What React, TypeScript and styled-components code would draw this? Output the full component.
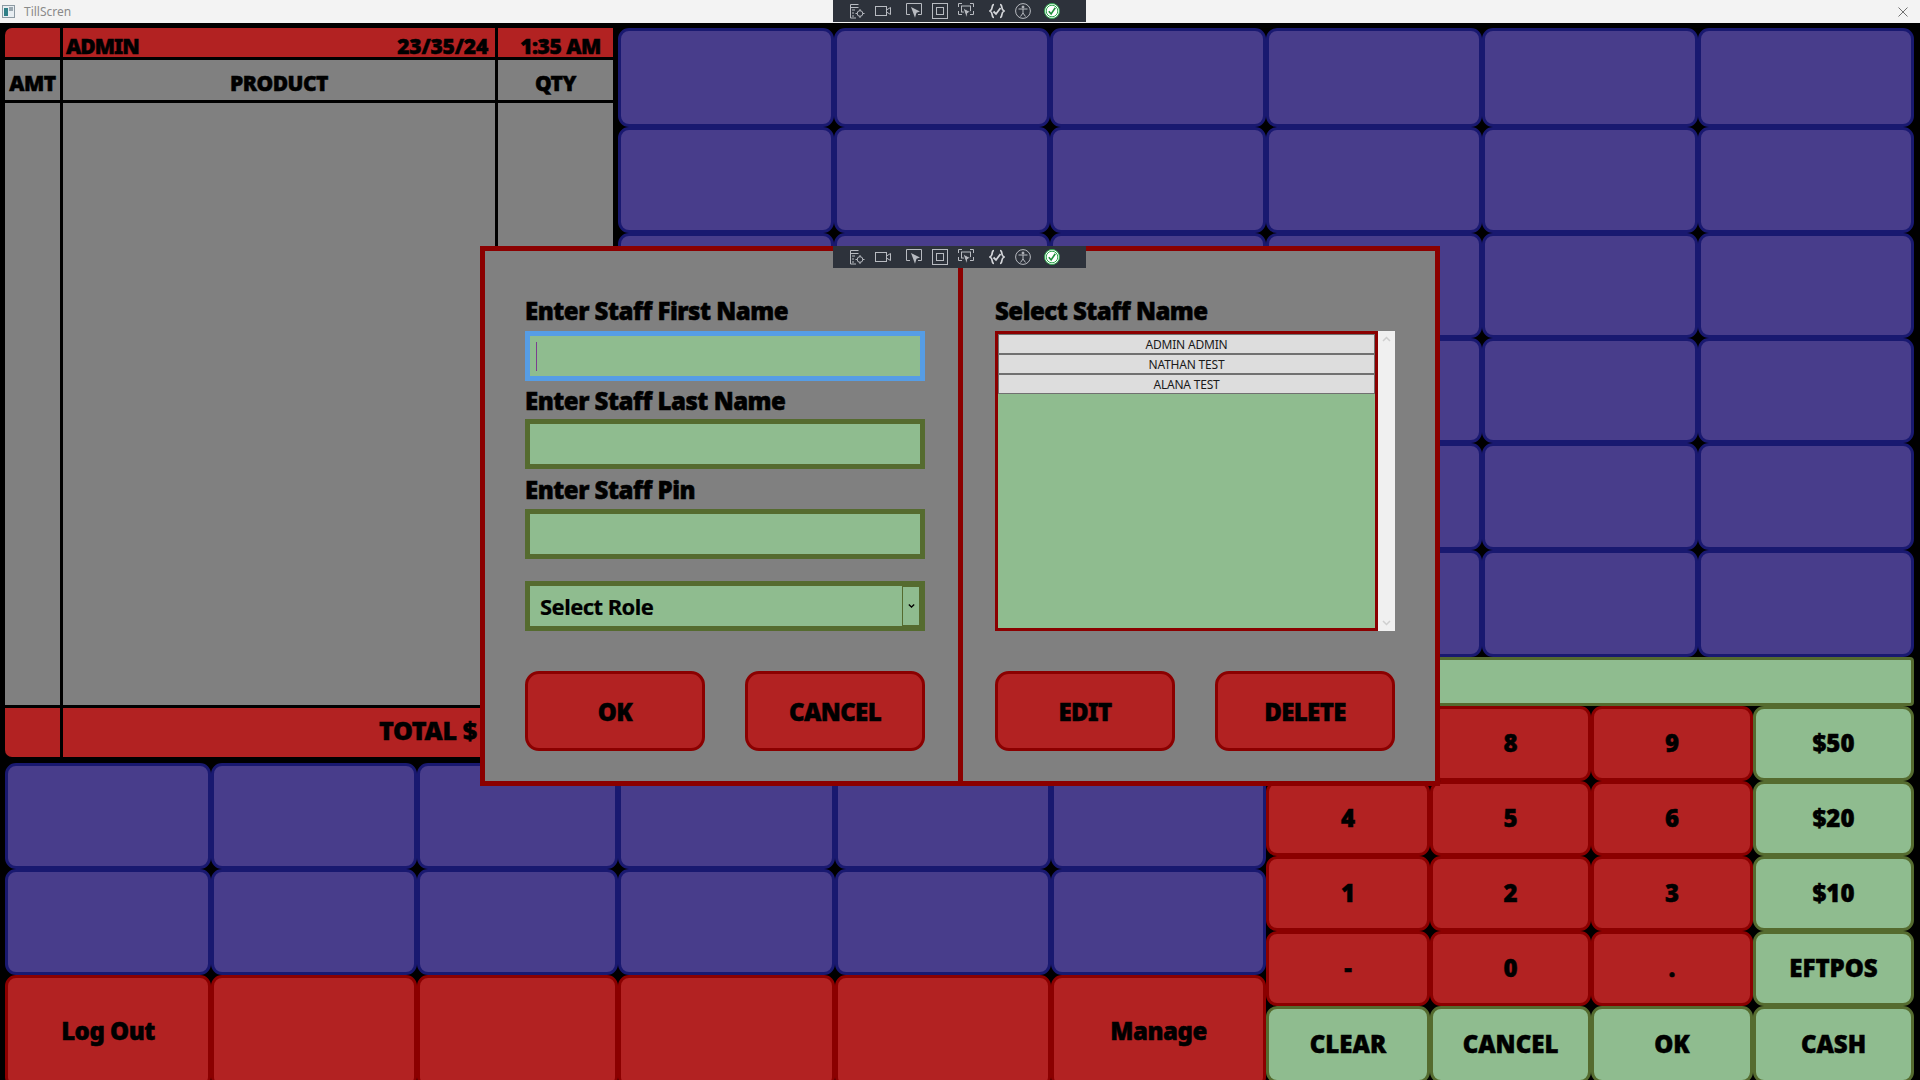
import React from "react";
import styled, { createGlobalStyle } from "styled-components";

const BLACK_FONT = `"Noto Sans", "Open Sans", "Liberation Sans", sans-serif`;
const colors = {
  red: "#b22222",
  darkRed: "#8b0000",
  purple: "#483d8b",
  navy: "#191970",
  green: "#8fbc8f",
  olive: "#556b2f",
  gray: "#808080",
};

const Global = createGlobalStyle`
  html, body { margin: 0; padding: 0; background: #000; }
`;

const Screen = styled.div`
  position: relative;
  width: 1920px;
  height: 1080px;
  overflow: hidden;
  background: #000;
  font-family: ${BLACK_FONT};
  color: #000;
`;

const TitleBar = styled.header`
  display: flex;
  align-items: center;
  height: 23px;
  padding: 0 12px 0 2px;
  box-sizing: border-box;
  background: #f3f3f3;
`;

const TitleText = styled.span`
  margin-left: 9px;
  flex: 1;
  font-size: 12px;
  color: #8a8a8a;
`;

const Body = styled.main`
  display: grid;
  grid-template-columns: 613px 648px 648px;
  grid-template-rows: 629px 49px 57px 318px;
  padding: 5px 6px 0 5px;
`;

const OrderPanel = styled.section`
  grid-column: 1;
  grid-row: 1 / 4;
  align-self: start;
  width: 608px;
  display: grid;
  grid-template-columns: 58px 435px 115px;
  grid-template-rows: 32px 43px 605px 49px;
`;

const Cell = styled.div<{ $tone: "red" | "gray"; $last?: boolean; $lastRow?: boolean; $justify?: string; $corner?: string }>`
  box-sizing: border-box;
  display: flex;
  align-items: center;
  justify-content: ${(p) => p.$justify || "center"};
  background: ${(p) => (p.$tone === "red" ? colors.red : colors.gray)};
  border-right: ${(p) => (p.$last ? "0" : "3px solid #000")};
  border-bottom: ${(p) => (p.$lastRow ? "0" : "3px solid #000")};
  border-radius: ${(p) => p.$corner || "0"};
  white-space: nowrap;
`;

const ColumnCell = styled(Cell)`
  padding-top: 6px;
`;

const HeadText = styled.span<{ $size?: number; $spacing?: number }>`
  font-size: ${(p) => p.$size || 21}px;
  font-weight: 900;
  letter-spacing: ${(p) => p.$spacing ?? -0.5}px;
  line-height: 26px;
  -webkit-text-stroke: 0.5px #000;
`;

const UserRow = styled(Cell)`
  padding: 6px 7px 0 3px;
`;

const TimeCell = styled(Cell)`
  padding: 6px 0 0 10px;
`;

const TotalCell = styled(Cell)`
  grid-column: 2 / 4;
  padding: 0 136px 5px 0;
`;

const PadGrid = styled.div<{ $cols: string; $rows: string }>`
  display: grid;
  grid-template-columns: ${(p) => p.$cols};
  grid-template-rows: ${(p) => p.$rows};
`;

const ProductGrid = styled(PadGrid)`
  grid-column: 2 / 4;
  grid-row: 1;
`;

const LowerGrid = styled(PadGrid)`
  grid-column: 1 / 3;
  grid-row: 4;
`;

const Keypad = styled(PadGrid)`
  grid-column: 3;
  grid-row: 3 / 5;
`;

const toneMap = {
  purple: [colors.purple, colors.navy],
  red: [colors.red, colors.darkRed],
  green: [colors.green, colors.olive],
} as const;

const PadButton = styled.button<{ $tone: keyof typeof toneMap; $tight?: boolean }>`
  box-sizing: border-box;
  margin: 0;
  padding: 0 0 2px;
  background: ${(p) => toneMap[p.$tone][0]};
  border: 3px solid ${(p) => toneMap[p.$tone][1]};
  border-radius: 11px;
  font-family: ${BLACK_FONT};
  font-weight: 900;
  font-size: 24px;
  letter-spacing: ${(p) => (p.$tight ? "-0.5px" : "0")};
  -webkit-text-stroke: 0.5px #000;
  color: #000;
`;

const AmountDisplay = styled.div`
  grid-column: 3;
  grid-row: 2;
  box-sizing: border-box;
  background: ${colors.green};
  border: 3px solid ${colors.olive};
  border-radius: 4px;
`;

const Dialog = styled.section`
  position: absolute;
  left: 480px;
  top: 246px;
  width: 960px;
  height: 540px;
  box-sizing: border-box;
  display: grid;
  grid-template-columns: 473px 5px 472px;
  background: ${colors.gray};
  border: 5px solid ${colors.darkRed};
`;

const Divider = styled.div`
  background: ${colors.darkRed};
`;

const Pane = styled.div<{ $left: number }>`
  padding: 48px 0 0 ${(p) => p.$left}px;
`;

const PaneInner = styled.div`
  width: 400px;
`;

const Group = styled.div<{ $top?: number }>`
  margin-top: ${(p) => p.$top || 0}px;
`;

const FieldLabel = styled.div<{ $line?: number }>`
  height: 32px;
  font-size: 24px;
  line-height: ${(p) => p.$line || 26}px;
  font-weight: 900;
  letter-spacing: -0.5px;
  -webkit-text-stroke: 0.5px #000;
  white-space: nowrap;
`;

const Field = styled.div<{ $focused?: boolean }>`
  box-sizing: border-box;
  height: 50px;
  display: flex;
  align-items: center;
  padding-left: 6px;
  background: ${colors.green};
  border: 5px solid ${(p) => (p.$focused ? "#569de5" : colors.olive)};
`;

const Caret = styled.i`
  display: block;
  width: 1px;
  height: 29px;
  background: #7b3f8f;
`;

const SelectBox = styled.div`
  box-sizing: border-box;
  height: 50px;
  display: flex;
  background: ${colors.olive};
  border: 5px solid ${colors.olive};
`;

const SelectText = styled.span`
  flex: 1;
  padding: 1px 0 0 10px;
  background: ${colors.green};
  font-size: 22px;
  line-height: 38px;
  font-weight: 700;
  letter-spacing: -0.55px;
  -webkit-text-stroke: 0.2px #000;
`;

const SelectToggle = styled.span`
  box-sizing: border-box;
  width: 16px;
  margin: 1px 1px 0 1px;
  height: 38px;
  display: flex;
  align-items: center;
  justify-content: center;
  background: ${colors.green};
`;

const ActionRow = styled.div`
  display: flex;
  justify-content: space-between;
  margin-top: 40px;
`;

const ActionButton = styled.button`
  box-sizing: border-box;
  width: 180px;
  height: 80px;
  padding: 0;
  background: ${colors.red};
  border: 3px solid ${colors.darkRed};
  border-radius: 14px;
  font-family: ${BLACK_FONT};
  font-weight: 900;
  font-size: 24px;
  letter-spacing: -0.6px;
  -webkit-text-stroke: 0.5px #000;
  color: #000;
`;

const ListWrap = styled.div`
  display: flex;
  height: 300px;
`;

const StaffList = styled.ul`
  box-sizing: border-box;
  width: 383px;
  margin: 0;
  padding: 0;
  list-style: none;
  background: ${colors.green};
  border: 3px solid ${colors.darkRed};
`;

const StaffItem = styled.li`
  box-sizing: border-box;
  height: 20px;
  display: flex;
  align-items: center;
  justify-content: center;
  background: #dddddd;
  border: 1px solid #707070;
  font-size: 12px;
  letter-spacing: -0.2px;
  color: #1a1a1a;
`;

const ScrollBar = styled.div`
  width: 17px;
  display: flex;
  flex-direction: column;
  align-items: center;
  justify-content: space-between;
  padding: 5px 0;
  box-sizing: border-box;
  background: #f0f0f0;
`;

const DebugBar = styled.div<{ $top: number }>`
  position: absolute;
  left: 833px;
  top: ${(p) => p.$top}px;
  width: 253px;
  height: 22px;
  display: flex;
  align-items: center;
  padding-left: 16px;
  box-sizing: border-box;
  background: #2d323b;
`;

const ToolIcon = styled.svg<{ $gap?: number }>`
  display: block;
  flex: none;
  width: 16px;
  height: 16px;
  margin-right: ${(p) => p.$gap ?? 10}px;
  fill: none;
  stroke: #b8bbc1;
  stroke-width: 1;
`;

const Toolbar = ({ top }: { top: number }) => (
  <DebugBar $top={top}>
    <ToolIcon viewBox="0 0 16 16">
      <path d="M9.5 1.5H1.5v13.5H7M1.5 4.5h8M3 7h3M3 10h2M3 13h2" />
      <circle cx="11" cy="10.5" r="2.8" />
      <path d="M11 6v2M11 13v2M6.5 10.5h2M13.5 10.5h2" />
    </ToolIcon>
    <ToolIcon viewBox="0 0 16 16" $gap={15}>
      <rect x="0.5" y="3.5" width="11" height="9" />
      <path d="M11.5 7l4-2.5v7l-4-2.5" />
    </ToolIcon>
    <ToolIcon viewBox="0 0 16 16">
      <path d="M4 11.5H.5V.5h15v11H12" />
      <path d="M5 4l9 4.5-3.5 1.2-1.500 5z" fill="#b8bbc1" stroke="none" />
    </ToolIcon>
    <ToolIcon viewBox="0 0 16 16">
      <rect x="0.5" y="0.5" width="15" height="15" />
      <rect x="4.5" y="4.5" width="7" height="7" />
    </ToolIcon>
    <ToolIcon viewBox="0 0 16 16" $gap={15}>
      <path d="M.5 4V.5H4M12 .5h3.5V4M15.500 8v3.500H12M4 11.500H.5V8" />
      <rect x="3.5" y="3" width="9" height="6" />
      <path d="M5 5l8 4-3.2 1-1.300 5z" fill="#b8bbc1" stroke="#2d323b" />
    </ToolIcon>
    <ToolIcon viewBox="0 0 16 16">
      <path d="M5 1.500C2 1.500 4.500 6.500 1 8c3.500 1.500 1 6.500 4 6.500M11 1.500c3 0 .5 5 4 6.500-3.500 1.500-1 6.500-4 6.500" stroke="#d4d6da" strokeWidth="1.700" />
      <path d="M4.500 8.500l2.500 2.500 4.500-6" stroke="#d4d6da" strokeWidth="1.800" />
    </ToolIcon>
    <ToolIcon viewBox="0 0 16 16" $gap={13}>
      <circle cx="8" cy="8" r="7.400" />
      <circle cx="8" cy="4" r="1" fill="#b8bbc1" />
      <path d="M3.500 6h9M8 6v4M8 10l-2.500 3.500M8 10l2.500 3.500" />
    </ToolIcon>
    <ToolIcon viewBox="0 0 16 16" $gap={0}>
      <circle cx="8" cy="8" r="7.500" fill="#ffffff" stroke="#2fa84f" />
      <circle cx="8" cy="8" r="5.800" fill="#ffffff" stroke="#2fa84f" />
      <path d="M4.800 8.200l2.300 2.700 4.200-6.200" stroke="#1f8f3c" strokeWidth="1.600" />
    </ToolIcon>
  </DebugBar>
);

const range = (n: number) => Array.from({ length: n }, (_, i) => i);

const lowerLabels = ["Log Out", "", "", "", "", "Manage"];
const keypad: [string, keyof typeof toneMap][] = [
  ["7", "red"], ["8", "red"], ["9", "red"], ["$50", "green"],
  ["4", "red"], ["5", "red"], ["6", "red"], ["$20", "green"],
  ["1", "red"], ["2", "red"], ["3", "red"], ["$10", "green"],
  ["-", "red"], ["0", "red"], [".", "red"], ["EFTPOS", "green"],
  ["CLEAR", "green"], ["CANCEL", "green"], ["OK", "green"], ["CASH", "green"],
];

export default function App() {
  return (
    <Screen>
      <Global />
      <TitleBar>
        <svg width="13" height="13" viewBox="0 0 13 13">
          <rect x="0.5" y="0.5" width="12" height="12" fill="#e8eef2" stroke="#8d9aa3" />
          <rect x="2" y="3" width="4" height="8" fill="#2f7f86" />
          <rect x="7" y="2" width="4" height="4" fill="#9aa7b0" />
        </svg>
        <TitleText>TillScren</TitleText>
        <svg width="10" height="10" viewBox="0 0 10 10" stroke="#707070" fill="none">
          <path d="M.5.5l9 9M9.5.5l-9 9" />
        </svg>
      </TitleBar>
      <Body>
        <OrderPanel>
          <Cell $tone="red" $corner="7px 0 0 0" />
          <UserRow $tone="red" $justify="space-between">
            <HeadText $spacing={-1}>ADMIN</HeadText>
            <HeadText $spacing={-0.2}>23/35/24</HeadText>
          </UserRow>
          <TimeCell $tone="red" $last>
            <HeadText>1:35 AM</HeadText>
          </TimeCell>
          <ColumnCell $tone="gray"><HeadText>AMT</HeadText></ColumnCell>
          <ColumnCell $tone="gray"><HeadText>PRODUCT</HeadText></ColumnCell>
          <ColumnCell $tone="gray" $last><HeadText>QTY</HeadText></ColumnCell>
          <Cell $tone="gray" />
          <Cell $tone="gray" />
          <Cell $tone="gray" $last />
          <Cell $tone="red" $lastRow $corner="0 0 0 7px" />
          <TotalCell $tone="red" $last $lastRow $justify="flex-end">
            <HeadText $size={25} $spacing={-0.3}>TOTAL $</HeadText>
          </TotalCell>
        </OrderPanel>

        <ProductGrid $cols="repeat(6, 216px)" $rows="99px 106px 105px 105px 107px 107px">
          {range(36).map((i) => <PadButton key={i} $tone="purple" />)}
        </ProductGrid>

        <AmountDisplay />

        <Keypad $cols="164px 161px 162px 161px" $rows="75px 75px 75px 75px 77px">
          {keypad.map(([label, tone]) => <PadButton key={label + tone} $tone={tone}>{label}</PadButton>)}
        </Keypad>

        <LowerGrid $cols="206px 206px 201px 217px 216px 215px" $rows="106px 106px 113px">
          {range(12).map((i) => <PadButton key={i} $tone="purple" />)}
          {lowerLabels.map((label, i) => <PadButton key={i} $tone="red" $tight>{label}</PadButton>)}
        </LowerGrid>
      </Body>

      <Toolbar top={0} />

      <Dialog>
        <Pane $left={40}>
          <PaneInner>
            <Group>
              <FieldLabel $line={24}>Enter Staff First Name</FieldLabel>
              <Field $focused><Caret /></Field>
            </Group>
            <Group $top={6}>
              <FieldLabel $line={28}>Enter Staff Last Name</FieldLabel>
              <Field />
            </Group>
            <Group $top={8}>
              <FieldLabel>Enter Staff Pin</FieldLabel>
              <Field />
            </Group>
            <Group $top={22}>
              <SelectBox>
                <SelectText>Select Role</SelectText>
                <SelectToggle>
                  <svg width="7" height="4" viewBox="0 0 7 4" fill="none" stroke="#000" strokeWidth="1.3">
                    <path d="M.8.5l2.700 2.500L6.200.5" />
                  </svg>
                </SelectToggle>
              </SelectBox>
            </Group>
            <ActionRow>
              <ActionButton>OK</ActionButton>
              <ActionButton>CANCEL</ActionButton>
            </ActionRow>
          </PaneInner>
        </Pane>
        <Divider />
        <Pane $left={32}>
          <PaneInner>
            <FieldLabel $line={24}>Select Staff Name</FieldLabel>
            <ListWrap>
              <StaffList>
                <StaffItem>ADMIN ADMIN</StaffItem>
                <StaffItem>NATHAN TEST</StaffItem>
                <StaffItem>ALANA TEST</StaffItem>
              </StaffList>
              <ScrollBar>
                <svg width="9" height="6" viewBox="0 0 9 6" fill="none" stroke="#cfcfcf" strokeWidth="1.5">
                  <path d="M1 5l3.500-3.500L8 5" />
                </svg>
                <svg width="9" height="6" viewBox="0 0 9 6" fill="none" stroke="#cfcfcf" strokeWidth="1.5">
                  <path d="M1 1l3.500 3.500L8 1" />
                </svg>
              </ScrollBar>
            </ListWrap>
            <ActionRow>
              <ActionButton>EDIT</ActionButton>
              <ActionButton>DELETE</ActionButton>
            </ActionRow>
          </PaneInner>
        </Pane>
      </Dialog>

      <Toolbar top={246} />
    </Screen>
  );
}
